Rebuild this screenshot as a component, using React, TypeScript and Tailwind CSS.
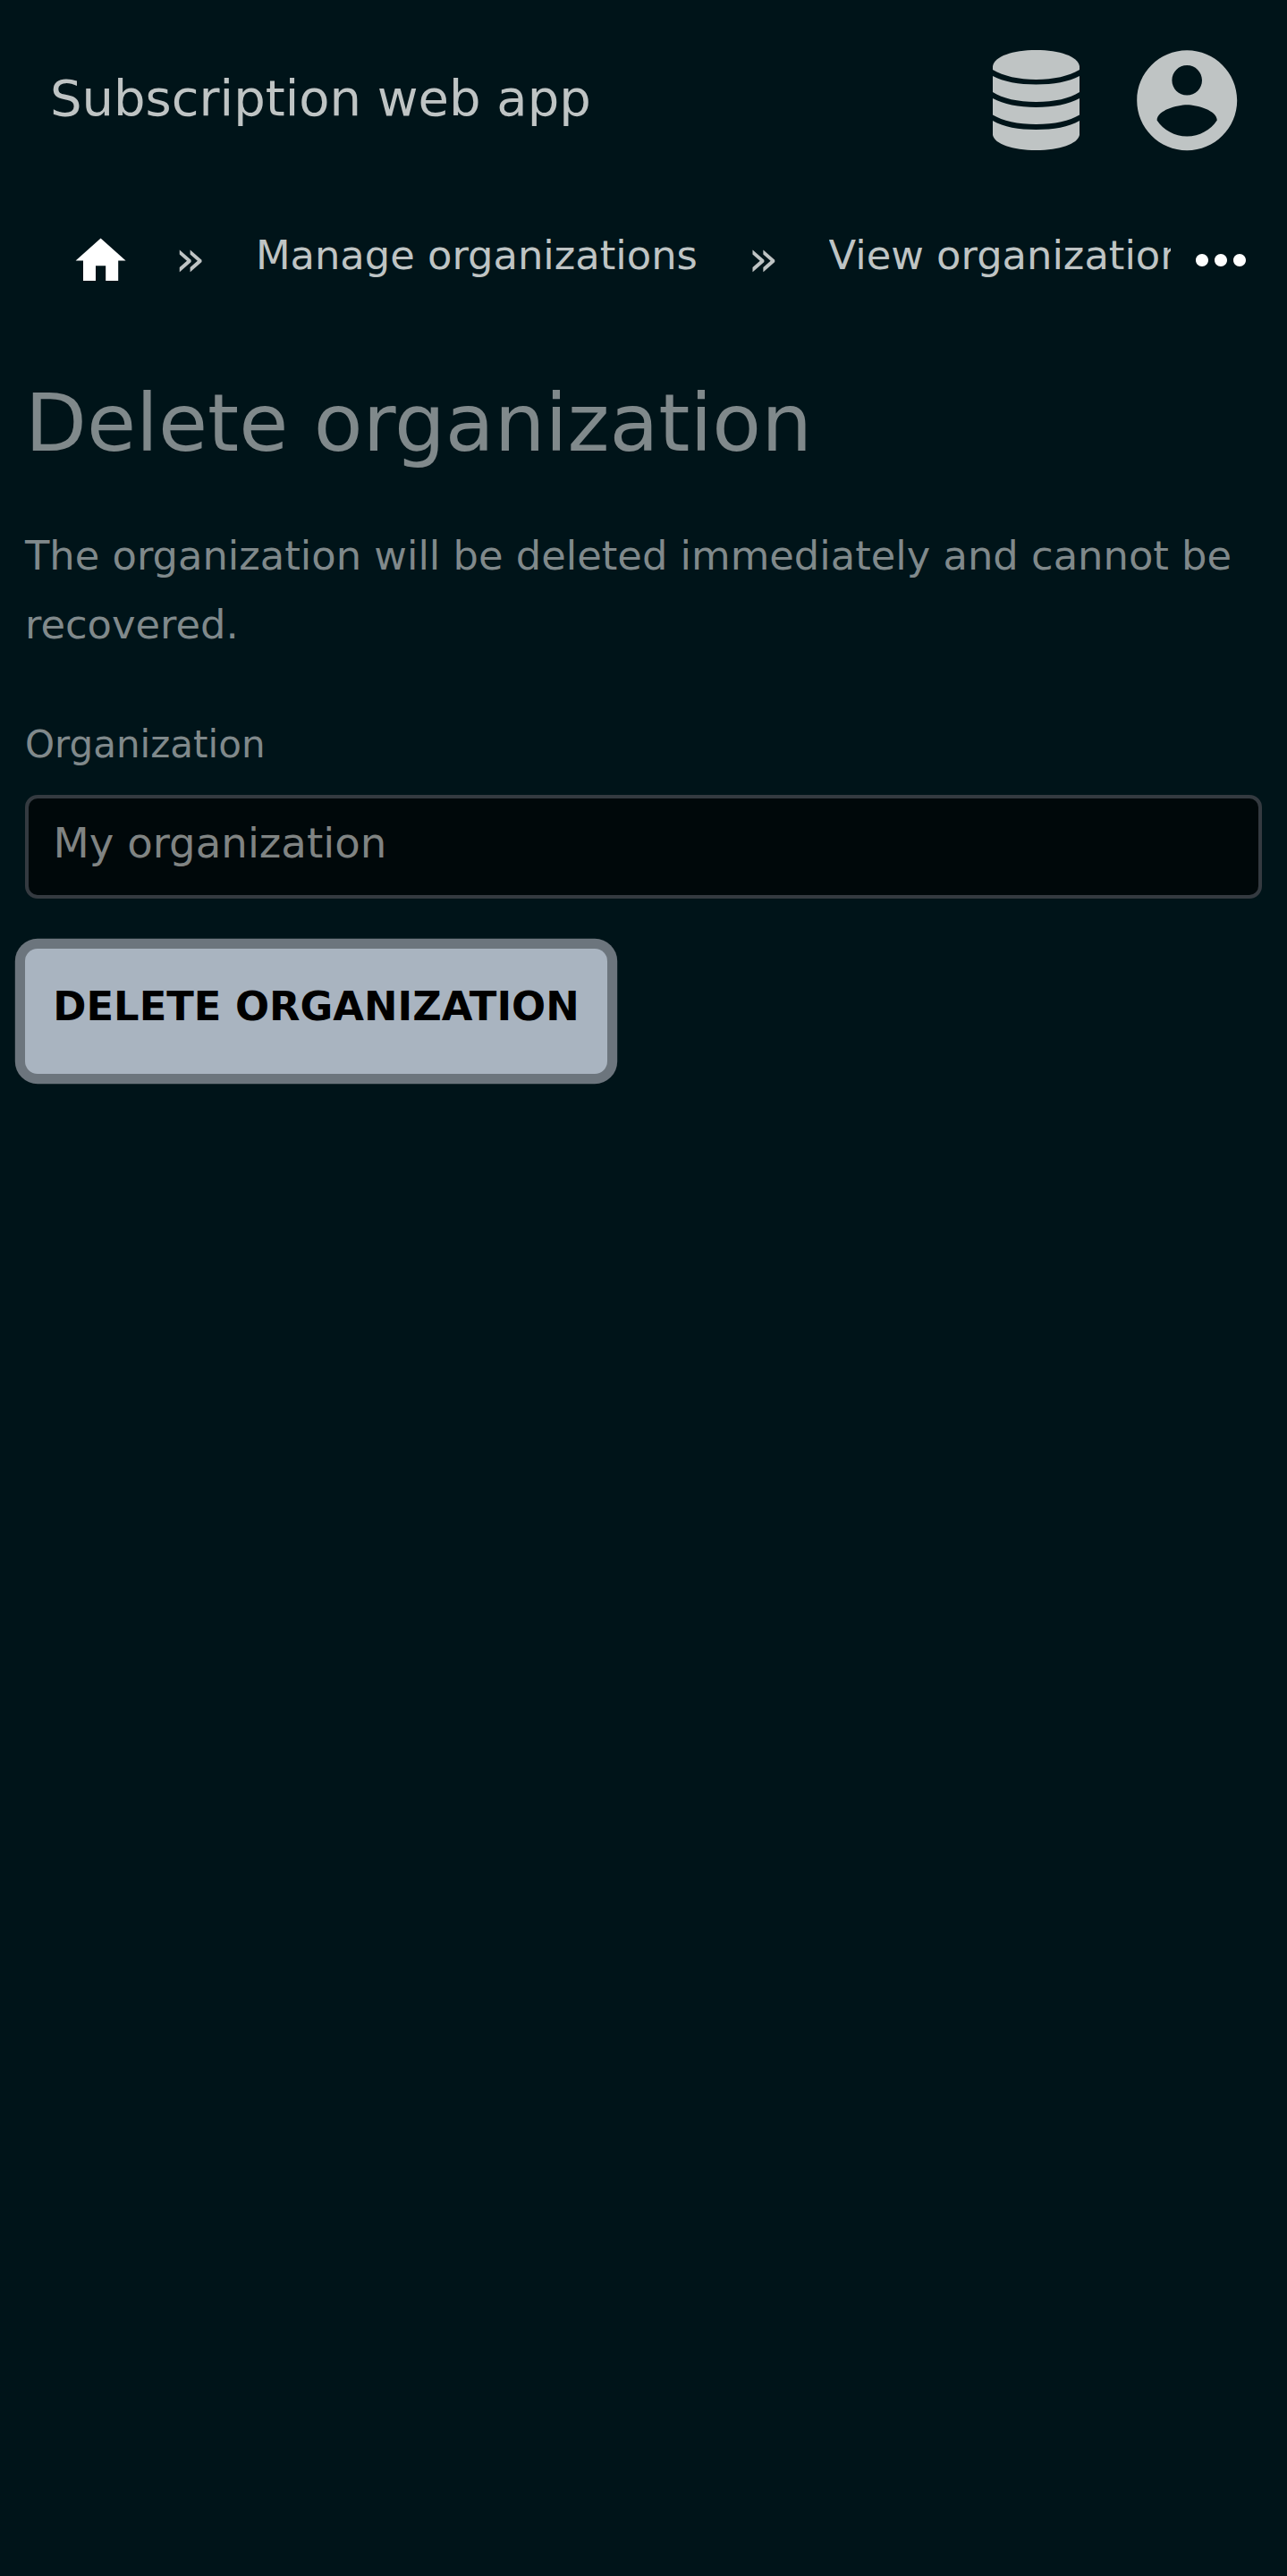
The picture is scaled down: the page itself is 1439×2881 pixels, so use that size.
import { MdHome, MdMoreHoriz } from "react-icons/md";

const DatabaseIcon = () => (
  <svg viewBox="0 0 97 112" className="h-28 w-[97px] shrink-0" fill="currentColor">
    <path d="M0 18C2 7 22 0 48.5 0S95 7 97 18V22C85 29 68 33 48.5 33S12 29 0 22Z" />
    <path d="M0 29C12 35.500 29 38.500 48.500 38.500S85 35.500 97 29V47C86 54 69 58 48.500 58S11 54 0 47Z" />
    <path d="M0 54C12 60.500 29 64 48.500 64S85 60.500 97 54V72.500C86 79 69 83 48.500 83S11 79 0 72.500Z" />
    <path d="M0 79C12 86 29 89 48.500 89S85 86 97 79V95C95 105 75 112 48.500 112S2 105 0 95Z" />
  </svg>
);

const AccountIcon = () => (
  <svg viewBox="0 0 24 24" className="-mr-[11px] size-[134.4px] shrink-0" fill="currentColor">
    <path d="M12 2C6.480 2 2 6.480 2 12s4.480 10 10 10 10-4.480 10-10S17.520 2 12 2zm0 3c1.660 0 3 1.340 3 3s-1.340 3-3 3-3-1.340-3-3 1.340-3 3-3zm0 14.200c-2.500 0-4.710-1.280-6-3.220.03-1.990 4-3.080 6-3.080 1.990 0 5.970 1.090 6 3.080-1.290 1.940-3.500 3.220-6 3.220z" />
  </svg>
);

export default function App() {
  return (
    <div className="min-h-[2881px] bg-[#001419] font-['DejaVu_Sans',sans-serif] text-[#80898b]">
      <header className="flex h-56 items-center px-14 text-[#bfc4c4]">
        <span className="-mt-[4px] text-[56px] leading-none">Subscription web app</span>
        <div className="ml-auto flex items-center gap-[53px]">
          <DatabaseIcon />
          <AccountIcon />
        </div>
      </header>
      <nav className="flex h-[132px] items-start pl-[79px] pr-8 pt-9 text-[44.8px] leading-[52px] text-[#bfc4c4]">
        <MdHome className="-mt-[2px] size-[67.2px] shrink-0 text-white" />
        <span className="ml-[49.4px] mt-[3px] w-[90.300px] shrink-0 text-[56px]">»</span>
        <span className="w-[550.4px] shrink-0 whitespace-nowrap">Manage organizations</span>
        <span className="mt-[3px] w-[90.300px] shrink-0 text-[56px]">»</span>
        <span className="w-[382px] shrink-0 overflow-hidden whitespace-nowrap">View organization</span>
        <MdMoreHoriz className="-mt-[11px] ml-auto size-[84px] shrink-0 text-white" />
      </nav>
      <main className="px-7 pt-[61px]">
        <h1 className="text-[89.6px] leading-[112px]">Delete organization</h1>
        <p className="mt-[54px] text-[44.8px] leading-[77px]">The organization will be deleted immediately and cannot be recovered.</p>
        <label className="mt-[70px] block text-[42px] leading-[52px]">Organization</label>
        <div className="mt-[30px] h-[115.5px] rounded-[14px] border-4 border-[#343a40] bg-[#00080a] px-[27.5px] text-[46.667px] leading-[100px] text-[#808483]">My organization</div>
        <button className="mt-14 flex h-[140px] w-[651px] items-center justify-center rounded-[14px] bg-[#a9b4c0] pb-[10px] text-[44.8px] font-bold whitespace-nowrap text-black ring-[11.2px] ring-[#6c757d]">DELETE ORGANIZATION</button>
      </main>
    </div>
  );
}
